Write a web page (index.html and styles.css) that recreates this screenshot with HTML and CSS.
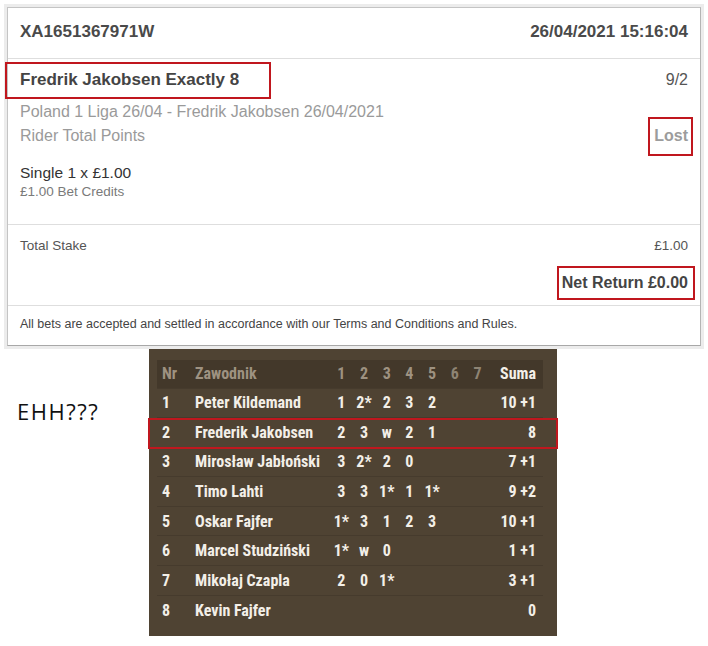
FILE: index.html
```html
<!DOCTYPE html>
<html lang="en">
<head>
  <meta charset="UTF-8" />
  <title>Bet Receipt</title>
  <link rel="stylesheet" href="styles.css">
</head>
<body>

  <div class="card">
    <div class="card-head">
      <span class="ref">XA1651367971W</span>
      <span class="stamp">26/04/2021 15:16:04</span>
    </div>

    <div class="bet">
      <div class="line line-title">
        <span class="pick flag flag-pick">Fredrik Jakobsen Exactly 8</span>
        <span class="odds">9/2</span>
      </div>
      <div class="line line-event">Poland 1 Liga 26/04 - Fredrik Jakobsen 26/04/2021</div>
      <div class="line line-market">
        <span>Rider Total Points</span>
        <span class="status flag flag-status">Lost</span>
      </div>
      <div class="stake">Single 1 x £1.00</div>
      <div class="credits">£1.00 Bet Credits</div>
    </div>

    <div class="totals">
      <div class="total-row">
        <span>Total Stake</span>
        <span>£1.00</span>
      </div>
      <div class="total-row net">
        <span class="flag flag-net">Net Return £0.00</span>
      </div>
    </div>

    <div class="terms">All bets are accepted and settled in accordance with our Terms and Conditions and Rules.</div>
  </div>

  <div class="lower">
    <div class="reaction">EHH???</div>

    <div class="heat">
      <table class="heat-table">
        <thead>
          <tr>
            <th class="c-nr">Nr</th>
            <th class="c-name">Zawodnik</th>
            <th class="c-h">1</th>
            <th class="c-h">2</th>
            <th class="c-h">3</th>
            <th class="c-h">4</th>
            <th class="c-h">5</th>
            <th class="c-h c-dim">6</th>
            <th class="c-h c-dim">7</th>
            <th class="c-sum">Suma</th>
          </tr>
        </thead>
        <tbody>
          <tr><td class="c-nr">1</td><td class="c-name">Peter Kildemand</td><td class="c-h">1</td><td class="c-h">2*</td><td class="c-h">2</td><td class="c-h">3</td><td class="c-h">2</td><td class="c-h"></td><td class="c-h"></td><td class="c-sum">10 +1</td></tr>
          <tr><td class="c-nr">2</td><td class="c-name">Frederik Jakobsen</td><td class="c-h">2</td><td class="c-h">3</td><td class="c-h">w</td><td class="c-h">2</td><td class="c-h">1</td><td class="c-h"></td><td class="c-h"></td><td class="c-sum">8</td></tr>
          <tr><td class="c-nr">3</td><td class="c-name">Mirosław Jabłoński</td><td class="c-h">3</td><td class="c-h">2*</td><td class="c-h">2</td><td class="c-h">0</td><td class="c-h"></td><td class="c-h"></td><td class="c-h"></td><td class="c-sum">7 +1</td></tr>
          <tr><td class="c-nr">4</td><td class="c-name">Timo Lahti</td><td class="c-h">3</td><td class="c-h">3</td><td class="c-h">1*</td><td class="c-h">1</td><td class="c-h">1*</td><td class="c-h"></td><td class="c-h"></td><td class="c-sum">9 +2</td></tr>
          <tr><td class="c-nr">5</td><td class="c-name">Oskar Fajfer</td><td class="c-h">1*</td><td class="c-h">3</td><td class="c-h">1</td><td class="c-h">2</td><td class="c-h">3</td><td class="c-h"></td><td class="c-h"></td><td class="c-sum">10 +1</td></tr>
          <tr><td class="c-nr">6</td><td class="c-name">Marcel Studziński</td><td class="c-h">1*</td><td class="c-h">w</td><td class="c-h">0</td><td class="c-h"></td><td class="c-h"></td><td class="c-h"></td><td class="c-h"></td><td class="c-sum">1 +1</td></tr>
          <tr><td class="c-nr">7</td><td class="c-name">Mikołaj Czapla</td><td class="c-h">2</td><td class="c-h">0</td><td class="c-h">1*</td><td class="c-h"></td><td class="c-h"></td><td class="c-h"></td><td class="c-h"></td><td class="c-sum">3 +1</td></tr>
          <tr><td class="c-nr">8</td><td class="c-name">Kevin Fajfer</td><td class="c-h"></td><td class="c-h"></td><td class="c-h"></td><td class="c-h"></td><td class="c-h"></td><td class="c-h"></td><td class="c-h"></td><td class="c-sum">0</td></tr>
        </tbody>
      </table>
      <div class="heat-mark"></div>
    </div>
  </div>

</body>
</html>
```

FILE: styles.css
```css
body {
  margin: 0;
  background-color: #ffffff;
  font-family: "Liberation Sans", Arial, sans-serif;
}

/* bet receipt card */

.card {
  box-sizing: border-box;
  width: 694px;
  margin: 7px 0 0 7px;
  border: 1px solid #c4c4c4;
  border-bottom-color: #a8a8a8;
  border-right-color: #b4b4b4;
  box-shadow: 0 0 0 3px #ececec;
  background-color: #ffffff;
}

.card-head {
  display: flex;
  justify-content: space-between;
  height: 48px;
  padding: 0 12px 2px 12px;
  line-height: 48px;
  border-bottom: 1px solid #dedede;
  font-size: 17px;
  font-weight: bold;
  color: #4a4a4a;
}

.bet {
  padding: 0 12px 23px 12px;
  border-bottom: 1px solid #dedede;
}

.line {
  display: flex;
  justify-content: space-between;
  line-height: 24px;
}

.line-title {
  margin-top: 9px;
  font-size: 17px;
  font-weight: bold;
  color: #444;
}

.odds {
  font-size: 16px;
  font-weight: normal;
  color: #555;
}

.line-event {
  margin-top: 8px;
  font-size: 16px;
  color: #9a9a9a;
}

.line-market {
  font-size: 16px;
  color: #9a9a9a;
}

.status {
  font-weight: bold;
  color: #9c9c9c;
}

.stake {
  margin-top: 15px;
  line-height: 20px;
  font-size: 15.5px;
  color: #333;
}

.credits {
  line-height: 18px;
  font-size: 13.5px;
  color: #7a7a7a;
}

.totals {
  padding: 11px 12px 12px 12px;
  border-bottom: 1px solid #dedede;
}

.total-row {
  display: flex;
  justify-content: space-between;
  line-height: 20px;
  font-size: 13.5px;
  color: #555;
}

.total-row.net {
  justify-content: flex-end;
  margin-top: 17px;
  font-size: 16px;
  font-weight: bold;
  color: #444;
}

.terms {
  padding: 10px 12px 13px 12px;
  line-height: 16px;
  font-size: 12.5px;
  color: #444;
}

/* red marks drawn over the receipt */

.flag {
  position: relative;
}

.flag::after {
  content: "";
  position: absolute;
  border: 2px solid #c0171e;
}

.flag-pick::after {
  left: -15px;
  right: -32px;
  top: -6px;
  bottom: -7px;
}

.flag-status::after {
  left: -6px;
  right: -5px;
  top: -7px;
  bottom: -8px;
}

.flag-net::after {
  left: -5px;
  right: -7px;
  top: -7px;
  bottom: -7px;
}

/* heat results */

.lower {
  display: flex;
  margin-top: 3px;
}

.reaction {
  width: 132px;
  padding: 47px 0 0 17px;
  line-height: 30px;
  font-family: "Open Sans", sans-serif;
  font-size: 22px;
  letter-spacing: 1.5px;
  color: #111;
}

.heat {
  position: relative;
  width: 408px;
  padding: 11px 14px 11px 8px;
  box-sizing: border-box;
  background-color: #4f4333;
}

.heat-table {
  width: 386px;
  border-collapse: collapse;
  table-layout: fixed;
  font-family: "Liberation Sans Narrow", "Roboto", sans-serif;
  font-stretch: condensed;
  font-size: 16px;
  font-weight: bold;
  color: #f3efe8;
}

.heat-table thead tr {
  height: 28px;
  background-color: #43382a;
  color: #9e9281;
}

.heat-table tbody tr {
  height: 29.6px;
  border-top: 1px solid #463b2d;
}

.heat-table th,
.heat-table td {
  padding: 0;
  white-space: nowrap;
}

.c-nr {
  width: 33px;
  padding-left: 5px !important;
  text-align: left;
}

.c-name {
  width: 135px;
  text-align: left;
}

.c-h {
  width: 22.7px;
  text-align: center;
}

.heat-table thead .c-dim {
  color: #8e8474;
}

.c-sum {
  text-align: right;
  padding-right: 7px !important;
}

.heat-table thead .c-sum {
  color: #f3efe8;
}

.heat-mark {
  position: absolute;
  left: -1px;
  top: 69px;
  width: 406px;
  height: 27px;
  border: 2px solid #c0171e;
}
```
